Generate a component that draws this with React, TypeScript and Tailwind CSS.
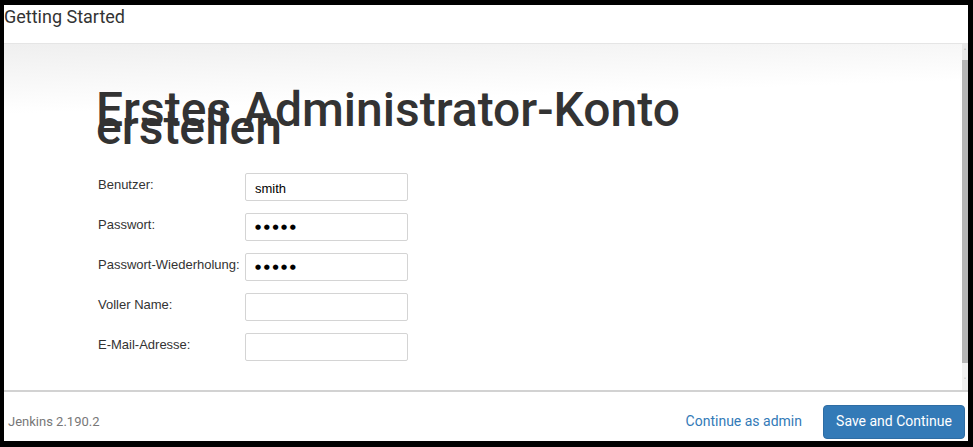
import React from 'react';

const fields = [
  { label: 'Benutzer:', value: 'smith', kind: 'text' },
  { label: 'Passwort:', value: '●●●●●', kind: 'password' },
  { label: 'Passwort-Wiederholung:', value: '●●●●●', kind: 'password' },
  { label: 'Voller Name:', value: '', kind: 'text' },
  { label: 'E-Mail-Adresse:', value: '', kind: 'text' },
];

function Scrollbar() {
  return (
    <div className="flex w-[6px] flex-col bg-[#f0f0f0]">
      <div className="flex h-[16px] items-start justify-center bg-[#e8e8e8] pt-[4px] text-[7px] leading-[7px] text-[#777]">
        ˄
      </div>
      <div className="h-[303px] bg-[#b5b5b5]" />
      <div className="flex flex-1 items-end justify-center pb-[6px] text-[7px] leading-[7px] text-[#888]">
        ˅
      </div>
    </div>
  );
}

export default function App() {
  return (
    <div className="h-[447px] w-[973px] bg-black pb-[6px] pl-[4px] pr-[5px] pt-[5px]">
      <div className="flex h-full flex-col bg-white">
        <div className="h-[39px] shrink-0 border-b border-[#e5e5e5] font-['Roboto',sans-serif] text-[18px] leading-[24px] text-[#333]">
          Getting Started
        </div>

        <div className="flex min-h-0 flex-1">
          <div className="flex-1 bg-[linear-gradient(178deg,#efefef_0px,#ffffff_70px)] pl-[92px] pt-[57px]">
            <h1 className="w-[600px] font-['Roboto',sans-serif] text-[48px] font-medium leading-[18px] text-[#333]">
              Erstes Administrator-Konto erstellen
            </h1>

            <div className="ml-[2px] mt-[36px] grid grid-cols-[147px_163px] gap-y-[12px] font-['Liberation_Sans',Arial,sans-serif] text-[13px] text-[#333]">
              {fields.map((f) => (
                <React.Fragment key={f.label}>
                  <div className="pt-[4px] leading-[16px]">{f.label}</div>
                  <div className="flex h-[28px] items-center rounded-[2px] border border-[#d4d4d4] px-[9px] text-black">
                    {f.kind === 'password' ? (
                      <span className="font-['DejaVu_Sans',sans-serif] text-[7px] tracking-[2.6px]">
                        {f.value}
                      </span>
                    ) : (
                      <span className="pt-[3px]">{f.value}</span>
                    )}
                  </div>
                </React.Fragment>
              ))}
            </div>
          </div>
          <Scrollbar />
        </div>

        <div className="flex h-[51px] shrink-0 items-center justify-between border-t-2 border-[#d2d2d2] pb-0 pr-[3px] pl-[4px] pt-[10px] font-['Roboto',sans-serif]">
          <span className="text-[13px] text-[#777]">Jenkins 2.190.2</span>
          <div className="flex items-center gap-[21px]">
            <a className="text-[14px] text-[#337ab7]">Continue as admin</a>
            <button className="h-[34px] w-[142px] rounded-[4px] border border-[#2e6da4] bg-[#337ab7] text-[14px] text-white">
              Save and Continue
            </button>
          </div>
        </div>
      </div>
    </div>
  );
}
